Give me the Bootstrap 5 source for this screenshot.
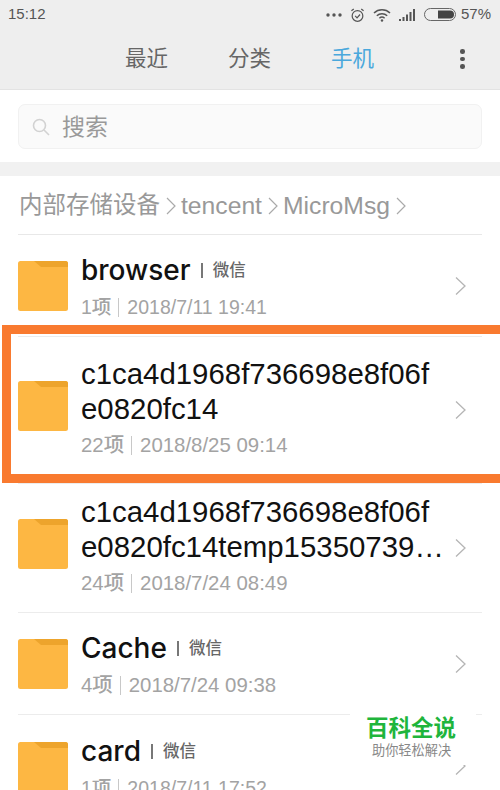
<!DOCTYPE html>
<html lang="zh">
<head>
    <meta charset="UTF-8">
    <meta name="viewport" content="width=device-width, initial-scale=1.0">
    <title>手机 - 文件管理</title>
    <link href="https://cdn.jsdelivr.net/npm/bootstrap@5.3.0/dist/css/bootstrap.min.css" rel="stylesheet">
    <style>
        html, body { height: 790px; overflow: hidden; }
        body {
            background: #fff;
            font-family: "Liberation Sans", "Noto Sans CJK SC", sans-serif;
            position: relative;
        }
        .status-row { height: 29px; padding: 0 9px 0 8px; background: #eeeeee; color: #555; font-size: 15px; }
        .status-icons { gap: 8px; }
        .status-pct { margin-left: -4px; }
        .tab-row { height: 61px; background: #eeeeee; border-bottom: 1px solid #e3e3e3; padding-left: 125px; color: #666; font-size: 21.5px; }
        .tab-item { width: 103px; }
        .tab-on { color: #4aa8dc; width: 93px; }
        .more-dot { width: 4.5px; height: 4.5px; border-radius: 50%; background: #555; }
        .more-btn { margin-left: 36px; gap: 3px; }
        .search-wrap { height: 72px; padding: 14px 18px 0; }
        .search-box { height: 45px; background: #fafafa; border: 1px solid #f1f1f1; border-radius: 7px; color: #999; font-size: 23px; padding-left: 13px; padding-top: 1px; gap: 12px; }
        .gray-band { height: 14px; background: #f1f1f1; }
        .crumb-row { height: 59px; margin: 0 18px; border-bottom: 1px solid #e8e8e8; color: #999; font-size: 23.5px; padding-left: 1px; padding-top: 1px; }
        .crumb-latin { font-size: 24.7px; }
        .crumb-arrow { margin: 0 5px 0 6px; }
        .file-row { margin: 0 18px; border-bottom: 1px solid #ececec; position: relative; }
        .file-row.h1 { height: 102px; }
        .file-row.h2 { height: 147px; padding-bottom: 8px; }
        .file-row.h3 { height: 129px; padding-bottom: 8px; }
        .file-row.h4 { height: 102px; padding-top: 2px; }
        .folder-ico { width: 50px; height: 50px; flex: none; }
        .file-body { margin-left: 13px; width: 372px; }
        .file-name { color: #111; font-family: Inter, "Noto Sans CJK SC", sans-serif; font-size: 28px; line-height: 35px; white-space: nowrap; }
        .file-name.name-hash { font-family: "Liberation Sans", sans-serif; font-size: 29.4px; }
        .file-tag { color: #666; font-size: 16.5px; margin-left: 10px; padding-left: 10px; border-left: 2px solid #777; line-height: 15px; }
        .file-meta { color: #a3a3a3; font-size: 19.5px; line-height: 24px; margin-top: 7px; }
        .file-meta.meta-wide { font-size: 20.4px; }
        .meta-sep { display: inline-block; width: 1px; height: 19px; background: #c8c8c8; margin: 0 8px 0 7px; vertical-align: -3px; }
        .row-arrow { position: absolute; right: 16px; top: 50%; margin-top: -10px; }
        .orange-frame { position: absolute; left: 2px; top: 325px; width: 510px; height: 158px; border: 9px solid #f97a2f; }
        .brand-mark { position: absolute; left: 350px; top: 714px; width: 126px; height: 51px; background: #fff; padding-left: 16px; }
        .brand-main { color: #1fb53c; font-size: 22.5px; font-weight: 700; line-height: 30px; }
        .brand-sub { color: #888; font-size: 13.2px; line-height: 14px; padding-left: 6px; white-space: nowrap; }
    </style>
</head>
<body>
    <div class="status-row d-flex align-items-center justify-content-between">
        <span>15:12</span>
        <div class="status-icons d-flex align-items-center">
            <svg width="16" height="6" viewBox="0 0 16 6"><circle cx="2" cy="3" r="1.7" fill="#555"/><circle cx="8" cy="3" r="1.7" fill="#555"/><circle cx="14" cy="3" r="1.7" fill="#555"/></svg>
            <svg width="15" height="16" viewBox="0 0 16 16" fill="none" stroke="#555" stroke-width="1.3"><circle cx="8" cy="9" r="5.7"/><path d="M5.5 9l2 2 3.2-3.500M1.500 3.500L4 1.500M14.500 3.500L12 1.500"/></svg>
            <svg width="18" height="14" viewBox="0 0 18 14" fill="none" stroke="#555" stroke-width="1.500"><path d="M1 5a11.500 11.500 0 0 1 16 0M3.800 7.800a7.500 7.500 0 0 1 10.400 0M6.400 10.200a3.800 3.800 0 0 1 5.200 0"/><circle cx="9" cy="12.500" r="1.200" fill="#555" stroke="none"/></svg>
            <svg width="17" height="12" viewBox="0 0 17 12" fill="#555"><rect x="0" y="10" width="2" height="2"/><rect x="3.500" y="8" width="2" height="4"/><rect x="7" y="5.500" width="2" height="6.500"/><rect x="10.500" y="3" width="2" height="9"/><rect x="14" y="0" width="2" height="12"/></svg>
            <svg width="33" height="13" viewBox="0 0 33 13"><rect x="0.500" y="0.500" width="31" height="12" rx="6" fill="none" stroke="#666"/><path d="M14 2.500h12a4 4 0 0 1 0 8H14z" fill="#444"/></svg>
            <span class="status-pct">57%</span>
        </div>
    </div>
    <div class="tab-row d-flex align-items-center">
        <div class="tab-item">最近</div>
        <div class="tab-item">分类</div>
        <div class="tab-on">手机</div>
        <div class="more-btn d-flex flex-column">
            <span class="more-dot"></span><span class="more-dot"></span><span class="more-dot"></span>
        </div>
    </div>
    <div class="search-wrap">
        <div class="search-box d-flex align-items-center">
            <svg width="18" height="18" viewBox="0 0 18 18" fill="none" stroke="#d2d2d2" stroke-width="1.600"><circle cx="7.500" cy="7.500" r="6"/><path d="M12 12l5 5"/></svg>
            <span>搜索</span>
        </div>
    </div>
    <div class="gray-band"></div>
    <div class="crumb-row d-flex align-items-center">
        <span>内部存储设备</span>
        <svg class="crumb-arrow" width="10" height="22" viewBox="0 0 10 22" fill="none" stroke="#aaa" stroke-width="1.200"><path d="M1 3l8 8-8 8"/></svg>
        <span class="crumb-latin">tencent</span>
        <svg class="crumb-arrow" width="10" height="22" viewBox="0 0 10 22" fill="none" stroke="#aaa" stroke-width="1.200"><path d="M1 3l8 8-8 8"/></svg>
        <span class="crumb-latin">MicroMsg</span>
        <svg class="crumb-arrow" width="10" height="22" viewBox="0 0 10 22" fill="none" stroke="#aaa" stroke-width="1.200"><path d="M1 3l8 8-8 8"/></svg>
    </div>

    <div id="fileList"></div>

    <template id="rowTemplate">
        <div class="file-row d-flex align-items-center">
            <svg class="folder-ico" viewBox="0 0 50 50"><rect width="50" height="50" rx="2.500" fill="#fdb743"/><path d="M16 0l7 6H50V2.500A2.500 2.500 0 0 0 47.500 0z" fill="#eda42c"/></svg>
            <div class="file-body">
                <div class="file-name"></div>
                <div class="file-meta"></div>
            </div>
            <svg class="row-arrow" width="11" height="20" viewBox="0 0 11 20" fill="none" stroke="#b5b5b5" stroke-width="1.300"><path d="M1 1.500l9 8.500-9 8.500"/></svg>
        </div>
    </template>

    <div class="orange-frame"></div>
    <div class="brand-mark">
        <div class="brand-main">百科全说</div>
        <div class="brand-sub">助你轻松解决</div>
    </div>

    <script>
        var files = [
            { h: "h1", name: "browser", tag: "微信", count: "1项", date: "2018/7/11 19:41" },
            { h: "h2", name: "c1ca4d1968f736698e8f06f<br>e0820fc14", count: "22项", date: "2018/8/25 09:14", wide: true },
            { h: "h3", name: "c1ca4d1968f736698e8f06f<br>e0820fc14temp15350739…", count: "24项", date: "2018/7/24 08:49", wide: true },
            { h: "h1", name: "Cache", tag: "微信", count: "4项", date: "2018/7/24 09:38", wide: true },
            { h: "h4", name: "card", tag: "微信", count: "1项", date: "2018/7/11 17:52" }
        ];
        var list = document.getElementById("fileList");
        var tpl = document.getElementById("rowTemplate").content;
        files.forEach(function (f) {
            var row = document.importNode(tpl, true);
            row.querySelector(".file-row").classList.add(f.h);
            var nameEl = row.querySelector(".file-name");
            var metaEl = row.querySelector(".file-meta");
            nameEl.innerHTML = f.name;
            if (f.tag) {
                nameEl.classList.add("d-flex", "align-items-center");
                nameEl.innerHTML = "<span>" + f.name + "</span><span class='file-tag'>" + f.tag + "</span>";
            } else {
                nameEl.classList.add("name-hash");
            }
            if (f.wide) metaEl.classList.add("meta-wide");
            metaEl.innerHTML = f.count + "<span class='meta-sep'></span>" + f.date;
            list.appendChild(row);
        });
    </script>
    <script src="https://cdn.jsdelivr.net/npm/bootstrap@5.3.0/dist/js/bootstrap.bundle.min.js"></script>
</body>
</html>
